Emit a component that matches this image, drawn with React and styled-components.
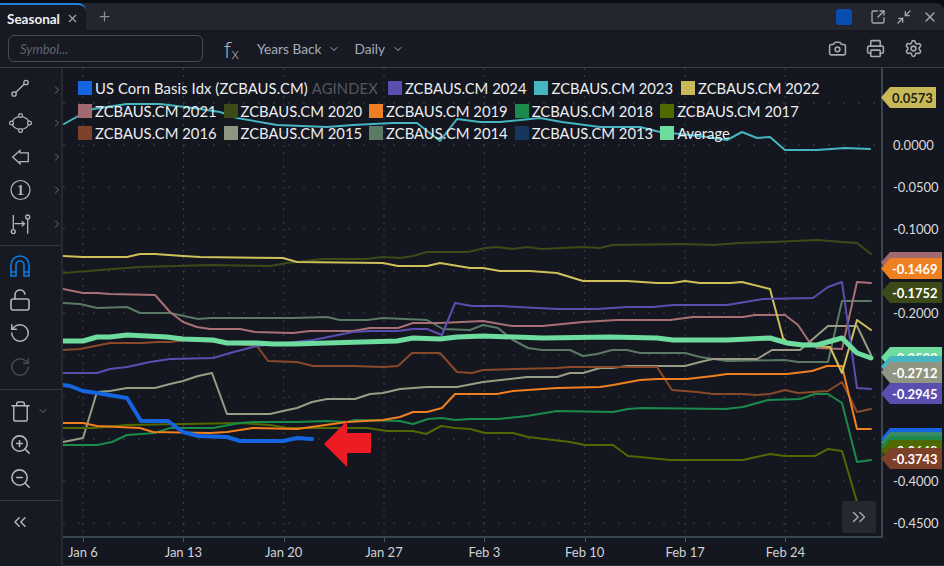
import styled, { createGlobalStyle } from "styled-components";
import {
  Camera,
  ChevronDown,
  ChevronRight,
  ChevronsLeft,
  ChevronsRight,
  LockOpen,
  Minimize2,
  Plus,
  Printer,
  RotateCcw,
  RotateCw,
  Settings,
  SquareArrowOutUpRight,
  Trash,
  X,
  ZoomIn,
  ZoomOut,
} from "lucide-react";

const GlobalStyle = createGlobalStyle`
  html, body {
    margin: 0;
    padding: 0;
    background: #0b0c12;
    overflow: hidden;
  }
  * {
    box-sizing: border-box;
  }
`;

const Page = styled.div`
  width: 944px;
  height: 566px;
  padding-top: 3px;
  display: flex;
  flex-direction: column;
  font-family: Lato, "Liberation Sans", sans-serif;
  background: #0b0c12;
`;

// tabs

const TabBar = styled.div`
  height: 27px;
  flex: none;
  display: flex;
  align-items: center;
  background: #23262e;
  border-radius: 8px 8px 0 0;
  color: #a3a7ae;
`;

const Tab = styled.div`
  width: 86px;
  height: 27px;
  padding: 2px 7px 0;
  display: flex;
  align-items: center;
  justify-content: space-between;
  background: #171a22;
  border-top: 2px solid #1e84dc;
  border-radius: 0 8px 0 0;
  color: #f0f1f3;
  font-size: 13.5px;
  font-weight: 700;
`;

const AddTab = styled.div`
  margin-left: 11px;
  display: flex;
  color: #8b8f97;
`;

const WindowActions = styled.div`
  margin-left: auto;
  padding-right: 6px;
  display: flex;
  align-items: center;
  gap: 10px;
  color: #a3a7ae;
`;

const ColorSquare = styled.div`
  width: 16px;
  height: 16px;
  margin-right: 8px;
  background: #0a4db0;
  border-radius: 3px;
`;

// toolbar

const Toolbar = styled.div`
  height: 38px;
  flex: none;
  padding: 0 21px 0 8px;
  display: flex;
  align-items: center;
  background: #171a22;
  border-bottom: 1px solid #3c3f47;
`;

const SymbolInput = styled.div`
  width: 195px;
  height: 27px;
  padding-left: 11px;
  display: flex;
  align-items: center;
  border: 1px solid #464a52;
  border-radius: 6px;
  color: #5e646e;
  font-size: 13px;
  font-style: italic;
`;

const Fx = styled.div`
  width: 15px;
  margin-left: 21px;
  display: flex;
  align-items: baseline;
  color: #b0b4bb;
  font-family: "Open Sans", sans-serif;
  font-weight: 300;
  font-size: 22px;
  line-height: 1;

  span {
    font-size: 15px;
    margin-left: 1px;
    transform: translateY(1px);
  }
`;

const Dropdown = styled.div`
  margin-left: ${(p) => p.$gap}px;
  display: flex;
  align-items: center;
  gap: 7px;
  color: #a4abbb;
  font-size: 13.7px;
`;

const ToolActions = styled.div`
  margin-left: auto;
  display: flex;
  align-items: center;
  gap: 19px;
  color: #a3a7ae;
`;

// main area

const Body = styled.div`
  flex: 1;
  display: flex;
  min-height: 0;
  background: #171a22;
`;

const SideBar = styled.div`
  width: 63px;
  flex: none;
  border-right: 2px solid #262931;
  color: #b3b7bf;
`;

const SideGroup = styled.div`
  padding: ${(p) => p.$top}px 0 ${(p) => p.$bottom}px;
  border-bottom: ${(p) => (p.$last ? "none" : "1px solid #35383f")};
`;

const SideRow = styled.div`
  height: 33.5px;
  display: flex;
  align-items: center;
  color: ${(p) => (p.$active ? "#0d7ae0" : p.$dim ? "#474b53" : "inherit")};

  .icon {
    width: 40px;
    display: flex;
    justify-content: center;
    flex: none;
  }

  .more {
    flex: none;
    margin-left: ${(p) => p.$moreGap ?? 11}px;
    color: #6c7078;
  }
`;

const ChartColumn = styled.div`
  flex: 1;
  min-width: 0;
  display: flex;
  flex-direction: column;
`;

const ChartRow = styled.div`
  height: 470px;
  flex: none;
  display: flex;
`;

const Plot = styled.div`
  position: relative;
  width: 818px;
  height: 470px;
  background: #141720;
  border-bottom: 2px solid #39454f;

  svg {
    display: block;
  }
`;

const Legend = styled.div`
  position: absolute;
  left: 15px;
  top: 9px;
  display: flex;
  flex-direction: column;
  color: #eceef0;
  font-size: 14.8px;
`;

const LegendRow = styled.div`
  height: 22.5px;
  display: flex;
  align-items: center;
  gap: ${(p) => p.$gap || 7}px;
  white-space: nowrap;
`;

const LegendItem = styled.div`
  display: flex;
  align-items: center;
  gap: 3px;

  i {
    width: 14px;
    height: 14px;
    background: ${(p) => p.$color};
  }

  span {
    letter-spacing: 0.1px;
  }

  em {
    margin: 0 2px 0 4px;
    font-style: normal;
    color: #53575f;
  }
`;

const ScrollButton = styled.div`
  position: absolute;
  right: 5px;
  bottom: 3px;
  width: 34px;
  height: 32px;
  display: flex;
  align-items: center;
  justify-content: center;
  background: #25282f;
  border-radius: 2px;
  color: #a3a7ae;
`;

const PriceAxis = styled.div`
  position: relative;
  width: 63px;
  height: 470px;
  padding: 56px 0 0 10px;
  border-left: 2px solid #39454f;
  background: #141720;
  color: #d8dade;
  font-size: 13px;
`;

const PriceLabel = styled.div`
  height: 42px;
  display: flex;
  align-items: center;
`;

const PriceTag = styled.div`
  position: absolute;
  left: -2px;
  width: ${(p) => p.$width || 61}px;
  height: 21px;
  padding-left: 11px;
  display: flex;
  align-items: center;
  background: ${(p) => p.$color};
  clip-path: polygon(0 50%, 9px 0, 100% 0, 100% 100%, 9px 100%);
  color: ${(p) => (p.$dark ? "#23240f" : "#ffffff")};
  font-size: 13px;
  font-weight: 700;
`;

const TimeAxis = styled.div`
  flex: 1;
  padding-left: 1px;
  display: flex;
  gap: 62.35px;
  border-bottom: 1px solid #262931;
  background: #141720;
  color: #d0d2d6;
  font-size: 13px;
`;

const TimeLabel = styled.div`
  position: relative;
  width: 38px;
  padding-top: 6px;
  display: flex;
  justify-content: center;
  white-space: nowrap;

  &::before {
    content: "";
    position: absolute;
    top: 0;
    left: 19px;
    width: 1px;
    height: 4px;
    background: #4b5660;
  }
`;

// hand drawn tool icons, the icon packages have nothing close

function LineToolIcon() {
  return (
    <svg width="24" height="24" viewBox="0 0 24 24" fill="none" stroke="currentColor" strokeWidth="1.3">
      <circle cx="6" cy="16" r="2.2" />
      <circle cx="18" cy="4.5" r="2.2" />
      <path d="M7.6 14.5 16.4 6" />
    </svg>
  );
}

function PolygonIcon() {
  return (
    <svg width="24" height="24" viewBox="0 0 24 24" fill="none" stroke="currentColor" strokeWidth="1.2">
      <path d="M10.8 5.5 6.5 7.5 4.3 10.3M14.2 5.5 18.5 7.5 20.7 10.3M4.3 13.7 6.5 16.5 10.8 18.5M20.7 13.7 18.5 16.5 14.2 18.5" />
      <circle cx="12.5" cy="4.5" r="1.9" />
      <circle cx="21.5" cy="12" r="1.9" />
      <circle cx="12.5" cy="19.5" r="1.9" />
      <circle cx="3.5" cy="12" r="1.9" />
    </svg>
  );
}

function ArrowToolIcon() {
  return (
    <svg width="24" height="24" viewBox="0 0 24 24" fill="none" stroke="currentColor" strokeWidth="1.3">
      <path d="M4.7 12 12 5.5V7.8H20.3V16.7H12V18.7Z" />
    </svg>
  );
}

function CircledOneIcon() {
  return (
    <svg width="24" height="24" viewBox="0 0 24 24" fill="none" stroke="currentColor" strokeWidth="1.2">
      <circle cx="12.5" cy="12" r="9.5" />
      <text
        x="12.5"
        y="17"
        fill="currentColor"
        stroke="none"
        textAnchor="middle"
        fontSize="14"
        fontWeight="700"
        fontFamily="Liberation Serif, serif"
      >
        1
      </text>
    </svg>
  );
}

function MeasureIcon() {
  return (
    <svg width="24" height="24" viewBox="0 0 24 24" fill="none" stroke="currentColor" strokeWidth="1.3">
      <path d="M5.3 3V17.5M19.7 7V21.7M6.5 11.7H16.5M13.8 9.2 16.5 11.7 13.8 14.2" />
      <circle cx="5.3" cy="19.6" r="2" />
      <circle cx="19.7" cy="5" r="2" />
    </svg>
  );
}

function MagnetIcon() {
  return (
    <svg width="24" height="24" viewBox="0 0 24 24" fill="none" stroke="currentColor" strokeWidth="1.6">
      <path d="M3 22V11a9 9 0 0 1 18 0V22H16V11a4 4 0 0 0-8 0V22ZM3 18H8M16 18H21" />
    </svg>
  );
}

const TIME_LABELS = ["Jan 6", "Jan 13", "Jan 20", "Jan 27", "Feb 3", "Feb 10", "Feb 17", "Feb 24"];

const PRICE_LABELS = [
  "0.0000",
  "-0.0500",
  "-0.1000",
  "-0.1500",
  "-0.2000",
  "-0.2500",
  "-0.3000",
  "-0.3500",
  "-0.4000",
  "-0.4500",
];

const GRID_Y = [103, 145, 187, 229, 271, 313, 355, 397, 439, 481, 523];
const GRID_X = [83, 183.4, 283.7, 384, 484.4, 584.7, 685, 785.4];

// y is the page pixel, tags are stacked in paint order
const TAGS = [
  { y: 87, text: "0.0573", color: "#c8b858", width: 55, dark: true },
  { y: 252, text: "-0.1380", color: "#a06a6e" },
  { y: 258, text: "-0.1469", color: "#ee7f22" },
  { y: 282, text: "-0.1752", color: "#3c4a18" },
  { y: 347, text: "-0.2532", color: "#6ddc9e" },
  { y: 356, text: "-0.2600", color: "#45b5bf" },
  { y: 362, text: "-0.2712", color: "#8f9580" },
  { y: 383, text: "-0.2945", color: "#5a4fb0" },
  { y: 428, text: "-0.3500", color: "#1565e0" },
  { y: 432, text: "-0.3540", color: "#3a8a6a" },
  { y: 436, text: "-0.3590", color: "#1b8a4a" },
  { y: 440, text: "-0.3648", color: "#4f6a00" },
  { y: 448, text: "-0.3743", color: "#7d4028" },
];

const LEGEND_ROWS = [
  [
    { label: "ZCBAUS.CM 2024", color: "#5a4fb0" },
    { label: "ZCBAUS.CM 2023", color: "#45b5bf" },
    { label: "ZCBAUS.CM 2022", color: "#c8b858" },
  ],
  [
    { label: "ZCBAUS.CM 2021", color: "#a06a6e" },
    { label: "ZCBAUS.CM 2020", color: "#3c4a18" },
    { label: "ZCBAUS.CM 2019", color: "#ee7f22" },
    { label: "ZCBAUS.CM 2018", color: "#1b8a4a" },
    { label: "ZCBAUS.CM 2017", color: "#4f6a00" },
  ],
  [
    { label: "ZCBAUS.CM 2016", color: "#7d4028" },
    { label: "ZCBAUS.CM 2015", color: "#8f9580" },
    { label: "ZCBAUS.CM 2014", color: "#5a7a66" },
    { label: "ZCBAUS.CM 2013", color: "#16365e" },
    { label: "Average", color: "#6ddc9e" },
  ],
];

const SERIES = [
  {
    color: "#5a7a66",
    points:
      "63,303 80,304 97,308 127,307 140,313 170,313 198,319 210,318 293,318 327,317 340,320 367,320 383,318 427,320 443,329 470,330 483,325 498,328 513,340 528,348 542,350 570,350 583,356 597,354 612,350 627,350 640,353 685,353 700,357 727,361 785,360 798,362 828,362 842,301 871,301",
  },
  {
    color: "#9a9c85",
    points:
      "63,442 83,438 97,392 110,391 127,388 155,388 170,384 183,381 198,376 212,373 227,414 270,414 283,411 297,408 312,402 327,399 355,399 370,394 383,393 400,389 427,387 457,387 483,382 527,377 557,377 570,373 583,373 600,368 612,368 627,366 685,366 700,362 713,359 757,359 772,350 800,350 828,326 857,326 871,355",
  },
  {
    color: "#8a4a2a",
    points:
      "63,350 80,349 110,343 143,343 157,342 170,342 187,340 217,342 257,346 268,361 297,362 313,366 353,366 383,367 398,366 412,353 440,353 457,372 472,373 483,370 557,368 570,367 657,367 672,390 697,392 713,394 742,394 757,395 770,394 785,390 798,393 828,391 842,382 857,412 871,409",
  },
  {
    color: "#4f6a00",
    points:
      "63,428 93,428 127,425 240,423 270,425 287,428 367,428 387,431 413,431 426,434 441,426 455,428 470,429 485,433 513,433 528,437 570,442 585,445 613,445 628,456 640,457 670,460 743,460 770,454 785,456 815,456 828,449 842,451 857,502",
  },
  {
    color: "#1b8a4a",
    points:
      "63,445 97,445 112,442 127,435 155,433 170,428 213,428 240,423 253,422 297,422 327,421 347,422 355,420 400,421 413,424 428,419 442,418 455,420 470,419 498,419 527,416 557,411 613,412 628,409 642,408 725,409 743,407 768,400 800,399 815,394 828,394 842,403 857,462 871,460",
  },
  {
    color: "#f08020",
    points:
      "63,423 83,423 97,426 140,428 153,432 210,433 227,432 253,428 297,429 347,422 383,420 400,417 413,412 427,412 442,408 455,394 497,394 513,391 557,388 600,387 613,385 640,380 657,379 687,379 713,376 727,374 787,374 812,371 827,366 842,366 857,429 871,429",
  },
  {
    color: "#3c4a18",
    points:
      "63,273 100,270 140,267 210,265 270,266 287,263 323,259 367,259 383,257 400,258 413,256 427,252 468,252 485,248 497,247 513,249 527,247 542,249 583,247 600,248 612,245 685,244 713,245 740,243 773,242 817,240 842,242 857,243 871,254",
  },
  {
    color: "#a87074",
    points:
      "63,289 83,293 97,293 110,294 155,295 170,312 183,322 197,327 210,329 240,329 255,332 293,333 310,331 353,331 370,328 398,328 413,323 440,323 483,321 512,326 542,326 583,322 617,320 670,320 693,317 743,317 755,315 785,315 798,325 808,340 817,348 842,349 857,282 871,283",
  },
  {
    color: "#d0c05a",
    points:
      "63,256 83,257 127,257 140,254 155,254 183,256 200,257 283,258 297,262 383,263 398,266 427,266 440,263 470,268 483,268 500,271 530,271 557,273 583,281 627,281 657,283 672,283 685,281 700,283 730,283 742,282 770,289 783,338 790,345 817,346 830,347 842,373 857,320 871,330",
  },
  {
    color: "#45b5bf",
    points:
      "64,124 80,115 93,109 127,104 160,104 193,108 220,112 237,118 277,125 327,127 353,125 393,123 417,123 440,141 457,119 480,122 500,122 540,118 562,122 600,127 640,127 660,132 700,136 727,140 742,132 757,138 770,137 785,150 817,150 845,148 870,149",
  },
  {
    color: "#5a4fb0",
    points:
      "63,373 97,373 110,369 127,367 150,362 170,359 213,358 230,353 257,346 313,340 353,332 370,331 398,331 413,329 427,329 442,335 455,303 472,306 500,306 557,309 597,309 627,307 653,307 673,305 727,305 763,299 813,298 828,287 842,282 857,388 871,389",
  },
  {
    color: "#6ddc9e",
    width: 5,
    points:
      "63,341 83,341 97,337 110,337 127,335 167,337 183,339 213,340 227,343 257,343 273,344 293,344 327,343 397,341 413,338 440,339 457,337 483,336 543,338 610,337 657,338 673,340 727,340 770,338 787,343 803,345 817,345 842,338 857,353 871,358",
  },
  {
    color: "#1565e0",
    width: 4,
    points:
      "63,385 70,386 83,391 97,393 127,398 141,421 168,421 183,432 198,436 227,437 240,441 283,441 297,438 312,439",
  },
];

function SeasonalChart() {
  return (
    <svg width="818" height="468" viewBox="63 68 818 468" fill="none">
      {GRID_Y.map((y) => (
        <line key={y} x1="63" x2="881" y1={y} y2={y} stroke="#3d424c" strokeDasharray="2 13" />
      ))}
      {GRID_X.map((x) => (
        <line key={x} x1={x} x2={x} y1="68" y2="536" stroke="#3d424c" strokeDasharray="2 5" />
      ))}
      {SERIES.map((s) => (
        <polyline
          key={s.color}
          points={s.points}
          stroke={s.color}
          strokeWidth={s.width || 2}
          strokeLinejoin="round"
          strokeLinecap="round"
        />
      ))}
      <polygon points="324,444 347,421 347,433 371,433 371,453 347,453 347,467" fill="#ed1c24" />
    </svg>
  );
}

function App() {
  return (
    <Page>
      <GlobalStyle />
      <TabBar>
        <Tab>
          Seasonal
          <X size={13} color="#a3a7ae" />
        </Tab>
        <AddTab>
          <Plus size={15} />
        </AddTab>
        <WindowActions>
          <ColorSquare />
          <SquareArrowOutUpRight size={16} />
          <Minimize2 size={16} />
          <X size={16} />
        </WindowActions>
      </TabBar>

      <Toolbar>
        <SymbolInput>Symbol...</SymbolInput>
        <Fx>
          f<span>x</span>
        </Fx>
        <Dropdown $gap={18}>
          Years Back <ChevronDown size={12} />
        </Dropdown>
        <Dropdown $gap={14}>
          Daily <ChevronDown size={12} />
        </Dropdown>
        <ToolActions>
          <Camera size={19} />
          <Printer size={19} />
          <Settings size={19} />
        </ToolActions>
      </Toolbar>

      <Body>
        <SideBar>
          <SideGroup $top={5} $bottom={4}>
            <SideRow>
              <span className="icon"><LineToolIcon /></span>
              <ChevronRight className="more" size={12} />
            </SideRow>
            <SideRow>
              <span className="icon"><PolygonIcon /></span>
              <ChevronRight className="more" size={12} />
            </SideRow>
            <SideRow>
              <span className="icon"><ArrowToolIcon /></span>
              <ChevronRight className="more" size={12} />
            </SideRow>
            <SideRow>
              <span className="icon"><CircledOneIcon /></span>
              <ChevronRight className="more" size={12} />
            </SideRow>
            <SideRow>
              <span className="icon"><MeasureIcon /></span>
              <ChevronRight className="more" size={12} />
            </SideRow>
          </SideGroup>
          <SideGroup $top={4} $bottom={5}>
            <SideRow $active>
              <span className="icon"><MagnetIcon /></span>
            </SideRow>
            <SideRow>
              <span className="icon"><LockOpen size={24} strokeWidth={1.6} /></span>
            </SideRow>
            <SideRow>
              <span className="icon"><RotateCcw size={22} strokeWidth={1.6} /></span>
            </SideRow>
            <SideRow $dim>
              <span className="icon"><RotateCw size={22} strokeWidth={1.6} /></span>
            </SideRow>
          </SideGroup>
          <SideGroup $top={5} $bottom={5}>
            <SideRow $moreGap={-3}>
              <span className="icon"><Trash size={23} strokeWidth={1.5} /></span>
              <ChevronDown className="more" size={12} />
            </SideRow>
            <SideRow>
              <span className="icon"><ZoomIn size={23} strokeWidth={1.6} /></span>
            </SideRow>
            <SideRow>
              <span className="icon"><ZoomOut size={23} strokeWidth={1.6} /></span>
            </SideRow>
          </SideGroup>
          <SideGroup $top={4} $bottom={0} $last>
            <SideRow>
              <span className="icon"><ChevronsLeft size={20} strokeWidth={1.8} /></span>
            </SideRow>
          </SideGroup>
        </SideBar>

        <ChartColumn>
          <ChartRow>
            <Plot>
              <SeasonalChart />
              <Legend>
                <LegendRow $gap={8}>
                  <LegendItem $color="#1565e0">
                    <i />
                    <span>
                      US Corn Basis Idx (ZCBAUS.CM)<em>AGINDEX</em>
                    </span>
                  </LegendItem>
                  {LEGEND_ROWS[0].map((item) => (
                    <LegendItem key={item.label} $color={item.color}>
                      <i />
                      {item.label}
                    </LegendItem>
                  ))}
                </LegendRow>
                {LEGEND_ROWS.slice(1).map((row) => (
                  <LegendRow key={row[0].label}>
                    {row.map((item) => (
                      <LegendItem key={item.label} $color={item.color}>
                        <i />
                        {item.label}
                      </LegendItem>
                    ))}
                  </LegendRow>
                ))}
              </Legend>
              <ScrollButton>
                <ChevronsRight size={22} strokeWidth={1.6} />
              </ScrollButton>
            </Plot>
            <PriceAxis>
              {PRICE_LABELS.map((label) => (
                <PriceLabel key={label}>{label}</PriceLabel>
              ))}
              {TAGS.map((tag) => (
                <PriceTag
                  key={tag.text}
                  $color={tag.color}
                  $width={tag.width}
                  $dark={tag.dark}
                  style={{ top: tag.y - 68 }}
                >
                  {tag.text}
                </PriceTag>
              ))}
            </PriceAxis>
          </ChartRow>
          <TimeAxis>
            {TIME_LABELS.map((label) => (
              <TimeLabel key={label}>{label}</TimeLabel>
            ))}
          </TimeAxis>
        </ChartColumn>
      </Body>
    </Page>
  );
}

export default App;
